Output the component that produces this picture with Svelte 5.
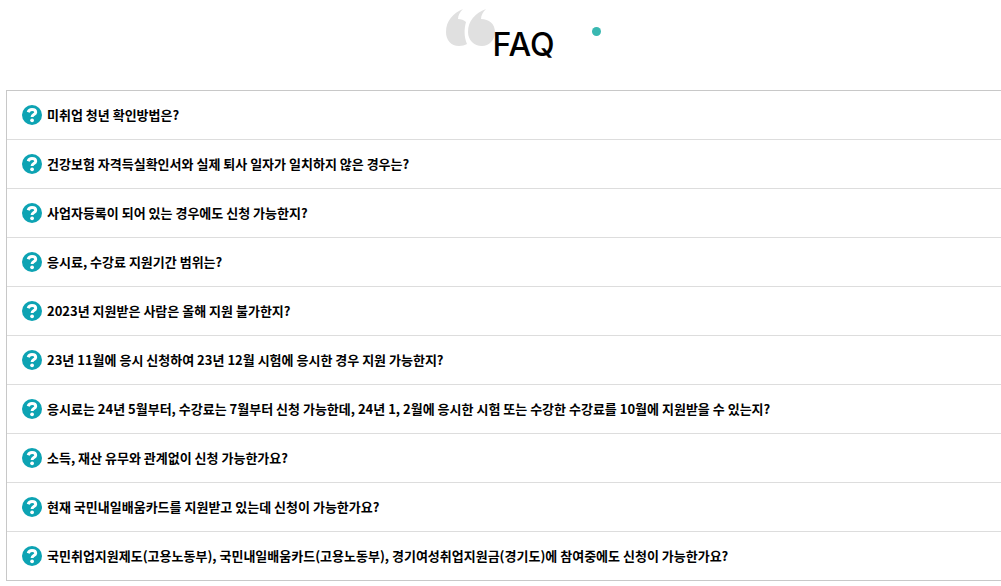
<script>
  const questions = [
    '미취업 청년 확인방법은?',
    '건강보험 자격득실확인서와 실제 퇴사 일자가 일치하지 않은 경우는?',
    '사업자등록이 되어 있는 경우에도 신청 가능한지?',
    '응시료, 수강료 지원기간 범위는?',
    '2023년 지원받은 사람은 올해 지원 불가한지?',
    '23년 11월에 응시 신청하여 23년 12월 시험에 응시한 경우 지원 가능한지?',
    '응시료는 24년 5월부터, 수강료는 7월부터 신청 가능한데, 24년 1, 2월에 응시한 시험 또는 수강한 수강료를 10월에 지원받을 수 있는지?',
    '소득, 재산 유무와 관계없이 신청 가능한가요?',
    '현재 국민내일배움카드를 지원받고 있는데 신청이 가능한가요?',
    '국민취업지원제도(고용노동부), 국민내일배움카드(고용노동부), 경기여성취업지원금(경기도)에 참여중에도 신청이 가능한가요?'
  ];
</script>

<section class="faq">
  <header>
    <div class="title">
      <svg class="quote" viewBox="0 0 50 38" aria-hidden="true">
        <path d="M17 0C7 4 0 12 0 23c0 8 5 14 13 14 3 0 6-1 8-2-3-7-3-15-1-22-2-2-5-3-8-3 0-4 2-7 5-10z" />
        <path d="M40 0C29 4 22 12 22 23c0 8 6 14 14 14 7 0 13-6 13-14S43 10 35 10c0-4 2-7 5-10z" />
      </svg>
      <h2>FAQ</h2>
      <span class="dot"></span>
    </div>
  </header>
  <ul>
    {#each questions as q}
      <li>
        <button type="button">
          <svg class="icon" viewBox="0 0 20 20" aria-hidden="true">
            <circle cx="10" cy="10" r="10" />
            <path d="M6.2 7.2C6.8 5.3 8.2 4.5 10 4.5c2.1 0 3.7 1.1 3.7 2.8 0 2.3-3.6 2.3-3.6 4.6" />
            <circle class="point" cx="10.1" cy="15.3" r="1.9" />
          </svg>
          <span>{q}</span>
        </button>
      </li>
    {/each}
  </ul>
</section>

<style>
  :global(body) {
    background: #fff;
  }
  .faq {
    padding: 9px 0 5px;
    color: #000;
    font-family: "Noto Sans CJK KR", sans-serif;
  }
  header {
    display: flex;
    justify-content: center;
    padding-bottom: 27px;
  }
  .title {
    position: relative;
    display: flex;
    align-items: flex-start;
  }
  .quote {
    width: 50px;
    height: 38px;
    margin-right: -4px;
    fill: #e0e0e0;
  }
  h2 {
    position: relative;
    margin: 18px 0 0;
    font: 500 32px/36px Inter, "Noto Sans CJK KR", sans-serif;
  }
  .dot {
    position: absolute;
    top: 18px;
    right: -46px;
    width: 9px;
    height: 9px;
    border-radius: 50%;
    background: #39b8b1;
  }
  ul {
    margin: 0 0 0 6px;
    padding: 0;
    border: 1px solid #c8c8c8;
    border-right: 0;
    list-style: none;
  }
  li + li {
    border-top: 1px solid #ddd;
  }
  button {
    display: flex;
    align-items: center;
    gap: 5px;
    width: 100%;
    padding: 14px 15px;
    border: 0;
    background: none;
    color: #000;
    font: 700 13px/20px "Noto Sans CJK KR", sans-serif;
    text-align: left;
    cursor: pointer;
  }
  .icon {
    flex: none;
    width: 20px;
    height: 20px;
    fill: #0da3b3;
  }
  .icon path {
    fill: none;
    stroke: #fff;
    stroke-width: 3;
  }
  .icon .point {
    fill: #fff;
  }
</style>
